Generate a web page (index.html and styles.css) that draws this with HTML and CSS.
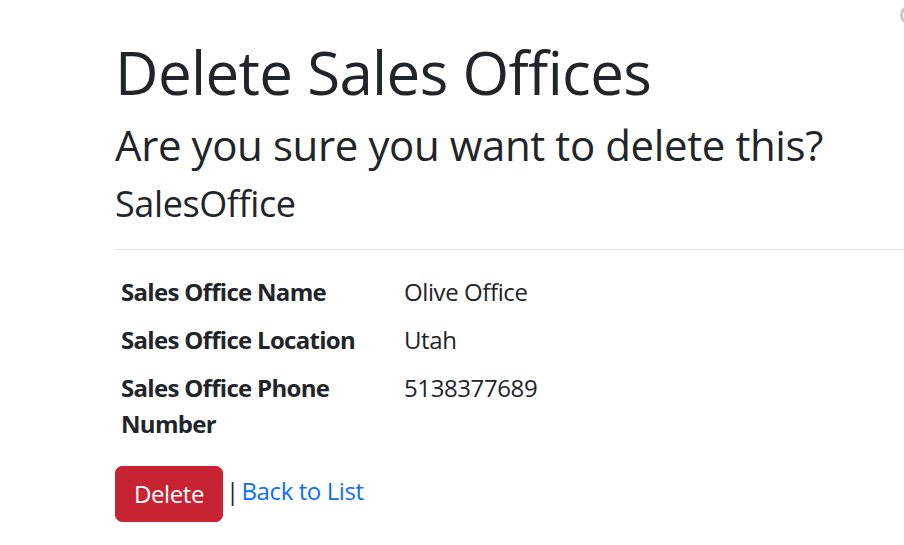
FILE: index.html
```html
<!DOCTYPE html>
<html lang="en">
<head>
<meta charset="utf-8">
<title>Delete Sales Offices</title>
<link rel="stylesheet" href="styles.css">
</head>
<body>
<div class="page">
  <h1 class="title">Delete Sales Offices</h1>
  <h3 class="question">Are you sure you want to delete this?</h3>
  <div class="details">
    <h4 class="entity">SalesOffice</h4>
    <hr class="divider">
    <dl class="fields">
      <dt class="label">Sales Office Name</dt>
      <dd class="value">Olive Office</dd>
      <dt class="label">Sales Office Location</dt>
      <dd class="value">Utah</dd>
      <dt class="label">Sales Office Phone Number</dt>
      <dd class="value">5138377689</dd>
    </dl>
    <form class="actions">
      <input type="submit" value="Delete" class="btn-danger"> | <a class="back-link" href="#">Back to List</a>
    </form>
  </div>
</div>
<span class="corner-dot"></span>
</body>
</html>
```

FILE: styles.css
```css
html, body {
  margin: 0;
  padding: 0;
  background: #ffffff;
  overflow: hidden;
}
body {
  font-family: "Open Sans", "Noto Sans", sans-serif;
  font-size: 24px;
  line-height: 1.5;
  color: #212529;
  letter-spacing: -0.4px;
}
.page {
  padding: 36px 0 0 115px;
}
.title {
  font-size: 60px;
  line-height: 1.2;
  font-weight: 500;
  letter-spacing: -0.65px;
  margin: 0 0 12px;
}
.question {
  font-size: 42px;
  line-height: 1.2;
  font-weight: 500;
  letter-spacing: -0.4px;
  margin: 0 0 12px;
}
.entity {
  font-size: 36px;
  line-height: 1.2;
  font-weight: 500;
  letter-spacing: -0.4px;
  margin: 0 0 12px;
}
.divider {
  border: 0;
  border-top: 1px solid #e3e4e5;
  margin: 23px 0 24px;
}
.fields {
  display: grid;
  grid-template-columns: 283px 1fr;
  margin: 0 0 24px;
  padding-left: 6px;
}
.label {
  font-weight: 700;
  letter-spacing: -0.7px;
  padding-right: 20px;
}
.value {
  margin: 0 0 12px;
}
.actions {
  margin: 0;
  word-spacing: -3px;
}
.btn-danger {
  font-family: inherit;
  font-size: 24px;
  line-height: 1.5;
  letter-spacing: -0.4px;
  word-spacing: 0;
  color: #ffffff;
  background: #c82333;
  border: 1px solid #c82333;
  border-radius: 7px;
  padding: 9px 18px;
  vertical-align: middle;
  cursor: pointer;
}
.back-link {
  color: #0d6efd;
  text-decoration: none;
  word-spacing: 0;
}
.corner-dot {
  position: absolute;
  top: 5px;
  left: 900px;
  width: 20px;
  height: 20px;
  border-radius: 50%;
  border: 3px solid #c9c9c9;
  box-sizing: border-box;
}
```
